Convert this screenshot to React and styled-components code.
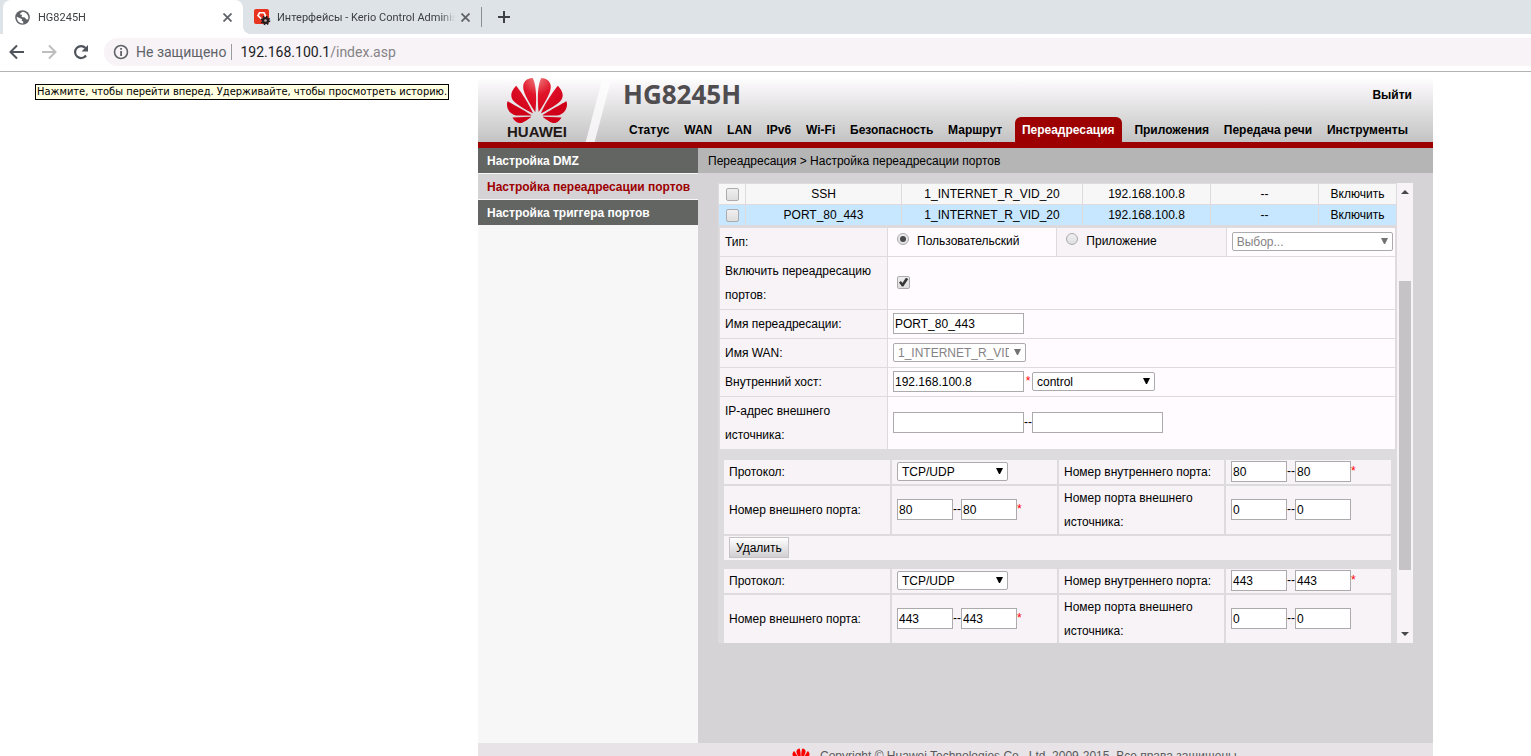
import React from 'react';
import styled, { createGlobalStyle } from 'styled-components';
import { SiHuawei } from 'react-icons/si';

const GlobalStyle = createGlobalStyle`
  * {
    box-sizing: border-box;
  }
  body {
    margin: 0;
    background: #fff;
    font-family: "Liberation Sans", Arial, sans-serif;
    font-size: 12px;
    color: #000;
  }
  input, select, button {
    font: inherit;
    color: inherit;
    margin: 0;
  }
`;

const Page = styled.div`
  position: relative;
  height: 100vh;
  overflow: hidden;
`;

/* browser chrome */
const BrowserBar = styled.header`
  border-bottom: 1px solid #b3b3b3;
  font-family: Roboto, sans-serif;
`;

const TabStrip = styled.div`
  display: flex;
  align-items: center;
  height: 34px;
  padding-left: 3px;
  background: #dee3e7;
`;

const BrowserTab = styled.div`
  position: relative;
  display: flex;
  align-items: center;
  gap: ${props => (props.$active ? 8 : 6)}px;
  width: ${props => (props.$active ? 240 : 238)}px;
  height: 34px;
  padding: 0 11px 0 ${props => (props.$active ? 12 : 11)}px;
  border-radius: 8px 8px 0 0;
  background: ${props => (props.$active ? '#fff' : 'transparent')};
  font-size: 11px;
  color: #3c4043;

  &::after {
    content: "";
    display: ${props => (props.$active ? 'block' : 'none')};
    position: absolute;
    left: 100%;
    bottom: 0;
    width: 8px;
    height: 8px;
    background: radial-gradient(circle at 100% 0, transparent 8px, #fff 8px);
  }
`;

const TabTitle = styled.span`
  flex: 1;
  overflow: hidden;
  white-space: nowrap;
  mask-image: linear-gradient(to right, #000 92%, transparent);
`;

const IconButton = styled.button`
  display: flex;
  padding: 0;
  border: 0;
  background: none;
`;

const TabDivider = styled.span`
  width: 1px;
  height: 20px;
  margin-right: 16px;
  background: #8b8f93;
`;

const Toolbar = styled.div`
  display: flex;
  align-items: center;
  gap: 14px;
  height: 37px;
  padding: 0 0 1px 8px;
`;

const AddressBar = styled.div`
  flex: 1;
  display: flex;
  align-items: center;
  height: 28px;
  padding-left: 9px;
  border-radius: 14px 0 0 14px;
  background: #f7f3f7;
  font-size: 14px;
  color: #868386;
`;

const Security = styled.span`
  margin: 0 8px 0 7px;
  padding-right: 5px;
  border-right: 1px solid #9a9a9f;
  line-height: 16px;
  color: #5f6368;
`;

const Host = styled.span`
  color: #202124;
`;

const Tooltip = styled.div`
  position: absolute;
  top: 84px;
  left: 35px;
  padding: 0 1px;
  border: 1px solid #000;
  background: #ffffe1;
  font-family: "DejaVu Sans Condensed", "DejaVu Sans", sans-serif;
  font-size: 11px;
  line-height: 14px;
  white-space: nowrap;
`;

/* router page */
const Columns = styled.div`
  display: grid;
  grid-template-columns: minmax(0, 478fr) minmax(0, 955px) minmax(0, 98fr);
`;

const Router = styled.div`
  grid-column: 2;
`;

const Banner = styled.div`
  display: flex;
  height: 76px;
  border-bottom: 6px solid #9c0000;
  background: linear-gradient(#fff 6px, #f7f5f7 14px, #c3c3c3);
`;

const LogoBox = styled.div`
  display: flex;
  flex-direction: column;
  align-items: center;
  width: 106px;
  padding: 5px 0 0 12px;
  font-size: 15px;
  font-weight: bold;
  line-height: 16px;
  color: #231815;
`;

const Petals = styled(SiHuawei)`
  width: 60px;
  height: 47px;

  path {
    fill: url(#petals);
  }
`;

const Slash = styled.div`
  width: 28px;
  clip-path: polygon(64% 12%, 96% 12%, 38% 100%, 6% 100%);
  background: linear-gradient(#fff, #f3f1f3);
`;

const BannerBody = styled.div`
  flex: 1;
  display: flex;
  flex-direction: column;
  justify-content: space-between;
`;

const BannerTop = styled.div`
  display: flex;
  justify-content: space-between;
  padding: 7px 21px 0 11px;
`;

const Model = styled.h1`
  margin: 0;
  font-family: "Noto Sans", sans-serif;
  font-size: 26px;
  line-height: 30px;
  color: #4f4d4f;
`;

const Logout = styled.a`
  padding-top: 9px;
  font-size: 12px;
  font-weight: bold;
  line-height: 14px;
  color: #000;
  text-decoration: none;
`;

const Nav = styled.nav`
  display: flex;
  justify-content: space-between;
  padding: 0 18px 0 10px;
`;

const NavLink = styled.a`
  margin: 0 ${props => (props.$active ? 5 : 0)}px;
  padding: 2px 7px 0;
  border-radius: 6px 6px 0 0;
  background: ${props => (props.$active ? '#9c0000' : 'none')};
  color: ${props => (props.$active ? '#fff' : '#000')};
  font-weight: bold;
  line-height: 23px;
  text-decoration: none;
  white-space: nowrap;
`;

const Body = styled.div`
  display: flex;
  height: 595px;
`;

const Sidebar = styled.aside`
  display: flex;
  flex-direction: column;
  gap: 1px;
  width: 220px;
  background: #f7f7f7;
`;

const SideLink = styled.a`
  padding: 2px 0 0 9px;
  background: ${props => (props.$active ? '#d6d3d6' : '#636563')};
  color: ${props => (props.$active ? '#9c0000' : '#fff')};
  font-weight: bold;
  line-height: 23px;
  text-decoration: none;
  white-space: nowrap;
`;

const Main = styled.main`
  flex: 1;
  min-width: 0;
  background: #d6d3d6;
`;

const Breadcrumb = styled.div`
  padding: 2px 0 0 10px;
  background: #b5b5b5;
  line-height: 23px;
`;

const Frame = styled.div`
  display: flex;
  height: 460px;
  margin: 10px 20px 0;
  overflow: hidden;
`;

const Scroller = styled.div`
  flex: 1;
  min-width: 0;
  background: #dedbde;
`;

const ScrollBar = styled.div`
  display: flex;
  flex-direction: column;
  align-items: center;
  justify-content: space-between;
  width: 16px;
  padding: 7px 0;
  background: #f7f3f7;
`;

const Thumb = styled.div`
  width: 12px;
  height: 289px;
  margin-top: 24px;
  background: #c6c3c6;
`;

const RuleTable = styled.table`
  width: 100%;
  table-layout: fixed;
  border-spacing: 1px;

  td {
    height: 20px;
    padding: 0;
    text-align: center;
    line-height: 20px;
  }
`;

const RuleRow = styled.tr`
  background: ${props => (props.$selected ? '#c6e7ff' : '#f7f7f7')};
`;

const RuleCol = styled.col`
  width: ${props => props.$width};
`;

const FormTable = styled.table`
  width: calc(100% - 2px);
  margin: 1px 1px 0;
  table-layout: fixed;
  border-spacing: 1px;
`;

const Label = styled.th`
  width: ${props => props.$width || 'auto'};
  height: 28px;
  padding: 2px 5px;
  background: #f7f3f7;
  font-weight: normal;
  line-height: 24px;
  text-align: left;
`;

const Field = styled.td`
  height: 28px;
  padding: 0 2px 2px 5px;
  background: ${props => (props.$shaded ? '#f7f3f7' : '#fffbff')};
`;

const PortTable = styled.table`
  width: calc(100% - 8px);
  margin: ${props => (props.$first ? 8 : 5)}px 4px 0;
  table-layout: fixed;
  border-spacing: 2px;

  th, td {
    height: 24px;
    padding: 0 5px;
    background: #f7f3f7;
  }
  td {
    padding-bottom: 2px;
  }
`;

const Controls = styled.div`
  display: flex;
  align-items: center;
`;

const Choice = styled.label`
  display: flex;
  gap: 8px;
  padding-left: 4px;
  line-height: 18px;
`;

const Tick = styled.input`
  appearance: none;
  display: block;
  width: 13px;
  height: 13px;
  margin: 0 auto;
  border: 1px solid #adaaad;
  border-radius: 2px;
  background: linear-gradient(#efefef, #dedede);

  &:checked::after {
    content: "";
    display: block;
    width: 11px;
    height: 11px;
    background: #393839;
    clip-path: polygon(9% 55%, 27% 42%, 40% 58%, 72% 12%, 94% 22%, 48% 90%, 36% 90%);
  }

  ${Controls} & {
    margin: 0 4px;
  }
`;

const Radio = styled.input`
  appearance: none;
  width: 12px;
  height: 12px;
  margin-top: 1px;
  border: 1px solid #adaaad;
  border-radius: 50%;
  background: linear-gradient(#efefef, #dedede);

  &:checked::after {
    content: "";
    display: block;
    width: 6px;
    height: 6px;
    margin: 2px;
    border-radius: 50%;
    background: #4a494a;
  }
`;

const TextBox = styled.input`
  width: ${props => props.$width}px;
  height: 21px;
  padding: 2px 1px 0;
  border: 1px solid #adaaad;
  background: #fff;
`;

const SelectWrap = styled.span`
  position: relative;
  display: flex;
  width: ${props => props.$width};

  svg {
    position: absolute;
    right: 5px;
    top: 6px;
    pointer-events: none;
  }
`;

const SelectBox = styled.select`
  appearance: none;
  width: 100%;
  height: 19px;
  padding: 1px 16px 0 4px;
  border: 1px solid #adaaad;
  border-radius: 2px;
  background: #fff;
  overflow: hidden;

  &:disabled {
    color: #848284;
    opacity: 1;
  }
`;

const Star = styled.span`
  width: 8px;
  color: #f00;
  text-align: ${props => (props.$tight ? 'left' : 'center')};
`;

const DeleteButton = styled.button`
  display: block;
  height: 21px;
  padding: 1px 6px 0;
  border: 1px solid #c6c3c6;
  background: linear-gradient(#fff, #d0ced0);
  line-height: 18px;
`;

const Footer = styled.footer`
  display: flex;
  align-items: center;
  gap: 9px;
  height: 26px;
  padding-left: 313px;
  background: #e7e3e7;
  color: #5a595a;
  white-space: nowrap;
`;

const navItems = ['Статус', 'WAN', 'LAN', 'IPv6', 'Wi-Fi', 'Безопасность', 'Маршрут', 'Переадресация', 'Приложения', 'Передача речи', 'Инструменты'];

const sideItems = ['Настройка DMZ', 'Настройка переадресации портов', 'Настройка триггера портов'];

const rules = [
    { name: 'SSH', wan: '1_INTERNET_R_VID_20', host: '192.168.100.8', source: '--', state: 'Включить' },
    { name: 'PORT_80_443', wan: '1_INTERNET_R_VID_20', host: '192.168.100.8', source: '--', state: 'Включить' },
];

function CloseIcon() {
    return (
        <svg width="9" height="9" viewBox="0 0 9 9" stroke="#5f6368" strokeWidth="1.8">
            <path d="M.5.5l8 8M8.5.5l-8 8" />
        </svg>
    );
}

function GlobeIcon() {
    return (
        <svg width="15" height="15" viewBox="0 0 15 15">
            <circle cx="7.5" cy="7.5" r="7.3" fill="#5f6368" />
            <path d="M8 1.8C6 2.4 5 3.4 5 4.4l2 .3-.4 2.2 3.2.7 1.4 1.7 2 .2a6 6 0 0 0-3.6-7.2z" fill="#fff" />
            <path d="M1.7 6.8l3.500 1.5 1.9.9-.4 1.6 1.500.8v1.8A6 6 0 0 1 1.7 6.8z" fill="#fff" />
        </svg>
    );
}

function KerioIcon() {
    return (
        <svg width="17" height="17" viewBox="0 0 17 17">
            <rect width="15" height="15" rx="2" fill="#e8341f" />
            <path d="M8 10.5L4 6.5 5.5 3.8h4.5L11.5 6.5 9.5 8.5" fill="none" stroke="#fff" strokeWidth="1.6" />
            <g transform="translate(11.5 11.5)">
                <circle r="3.6" fill="#231f20" />
                <circle r="4" fill="none" stroke="#231f20" strokeWidth="1.6" strokeDasharray="1.6 1.54" />
                <circle r="1.3" fill="#c8a9a4" />
            </g>
        </svg>
    );
}

function Arrow({ forward }) {
    return (
        <svg width="18" height="18" viewBox="0 0 18 18" fill="none" stroke={forward ? '#bdbebd' : '#50555c'} strokeWidth="2">
            {forward ? <path d="M2 9h13M9 2.5L15.5 9 9 15.5" /> : <path d="M16 9H3M9 2.5L2.5 9 9 15.5" />}
        </svg>
    );
}

function ReloadIcon() {
    return (
        <svg width="18" height="18" viewBox="0 0 18 18">
            <path d="M14 12.5A6 6 0 1 1 13.5 5" fill="none" stroke="#50555c" strokeWidth="2.2" />
            <path d="M16 2v6.5H9.5z" fill="#50555c" />
        </svg>
    );
}

function InfoIcon() {
    return (
        <svg width="16" height="16" viewBox="0 0 16 16">
            <circle cx="8" cy="8" r="6.5" fill="none" stroke="#5f6368" strokeWidth="1.6" />
            <path d="M7.2 4h1.8v1.8H7.2zM7.2 7h1.8v5H7.2z" fill="#5f6368" />
        </svg>
    );
}

function Select({ label, value, width, disabled }) {
    return (
        <SelectWrap $width={width}>
            <SelectBox aria-label={label} disabled={disabled} defaultValue={value}>
                <option>{value}</option>
            </SelectBox>
            <svg width="7" height="6" viewBox="0 0 7 6" fill={disabled ? '#737173' : '#000'}>
                <path d="M0 0h7L4 6H3z" />
            </svg>
        </SelectWrap>
    );
}

function PortRange({ label, value, required }) {
    return (
        <Controls>
            <TextBox $width={56} aria-label={label + ' от'} defaultValue={value} />
            --
            <TextBox $width={56} aria-label={label + ' до'} defaultValue={value} />
            {required && <Star $tight>*</Star>}
        </Controls>
    );
}

function PortGroup({ port, first }) {
    return (
        <PortTable $first={first}>
            <tbody>
                <tr>
                    <Label scope="row" $width="166px">Протокол:</Label>
                    <Field><Select label="Протокол" value="TCP/UDP" width="111px" /></Field>
                    <Label scope="row">Номер внутреннего порта:</Label>
                    <Field><PortRange label="Внутренний порт" value={port} required /></Field>
                </tr>
                <tr>
                    <Label scope="row">Номер внешнего порта:</Label>
                    <Field><PortRange label="Внешний порт" value={port} required /></Field>
                    <Label scope="row">Номер порта внешнего источника:</Label>
                    <Field><PortRange label="Порт внешнего источника" value="0" /></Field>
                </tr>
                {first && (
                    <tr>
                        <Field colSpan={4}><DeleteButton type="button">Удалить</DeleteButton></Field>
                    </tr>
                )}
            </tbody>
        </PortTable>
    );
}

function App() {
    return (
        <Page>
            <GlobalStyle />
            <BrowserBar>
                <TabStrip>
                    <BrowserTab $active>
                        <GlobeIcon />
                        <TabTitle>HG8245H</TabTitle>
                        <IconButton aria-label="Закрыть"><CloseIcon /></IconButton>
                    </BrowserTab>
                    <BrowserTab>
                        <KerioIcon />
                        <TabTitle>Интерфейсы - Kerio Control Administration</TabTitle>
                        <IconButton aria-label="Закрыть"><CloseIcon /></IconButton>
                    </BrowserTab>
                    <TabDivider />
                    <IconButton aria-label="Новая вкладка">
                        <svg width="12" height="12" viewBox="0 0 12 12" stroke="#3c4043" strokeWidth="2">
                            <path d="M6 0v12M0 6h12" />
                        </svg>
                    </IconButton>
                </TabStrip>
                <Toolbar>
                    <IconButton aria-label="Назад"><Arrow /></IconButton>
                    <IconButton aria-label="Вперед"><Arrow forward /></IconButton>
                    <IconButton aria-label="Обновить"><ReloadIcon /></IconButton>
                    <AddressBar>
                        <InfoIcon />
                        <Security>Не защищено</Security>
                        <Host>192.168.100.1</Host>/index.asp
                    </AddressBar>
                </Toolbar>
            </BrowserBar>

            <Columns>
                <Router>
                    <Banner>
                        <LogoBox>
                            <svg width="60" height="0">
                                <radialGradient id="petals" gradientUnits="userSpaceOnUse" cx="12" cy="3" r="15">
                                    <stop offset="0" stopColor="#f08080" />
                                    <stop offset="0.45" stopColor="#e0142a" />
                                    <stop offset="1" stopColor="#d00018" />
                                </radialGradient>
                            </svg>
                            <Petals viewBox="0 2.7 24 18.6" />
                            HUAWEI
                        </LogoBox>
                        <Slash />
                        <BannerBody>
                            <BannerTop>
                                <Model>HG8245H</Model>
                                <Logout href="#logout">Выйти</Logout>
                            </BannerTop>
                            <Nav>
                                {navItems.map(item => (
                                    <NavLink key={item} href="#nav" $active={item === 'Переадресация'}>{item}</NavLink>
                                ))}
                            </Nav>
                        </BannerBody>
                    </Banner>

                    <Body>
                        <Sidebar>
                            {sideItems.map((item, i) => (
                                <SideLink key={item} href="#side" $active={i === 1}>{item}</SideLink>
                            ))}
                        </Sidebar>
                        <Main>
                            <Breadcrumb>Переадресация &gt; Настройка переадресации портов</Breadcrumb>
                            <Frame>
                                <Scroller>
                                    <RuleTable>
                                        <colgroup>
                                            <RuleCol $width="26px" />
                                            <RuleCol $width="155px" />
                                            <RuleCol $width="auto" />
                                            <RuleCol $width="127px" />
                                            <RuleCol $width="107px" />
                                            <RuleCol $width="77px" />
                                        </colgroup>
                                        <tbody>
                                            {rules.map((rule, i) => (
                                                <RuleRow key={rule.name} $selected={i === 1}>
                                                    <td><Tick type="checkbox" aria-label={rule.name} /></td>
                                                    <td>{rule.name}</td>
                                                    <td>{rule.wan}</td>
                                                    <td>{rule.host}</td>
                                                    <td>{rule.source}</td>
                                                    <td>{rule.state}</td>
                                                </RuleRow>
                                            ))}
                                        </tbody>
                                    </RuleTable>

                                    <FormTable>
                                        <tbody>
                                            <tr>
                                                <Label scope="row" $width="167px">Тип:</Label>
                                                <Field>
                                                    <Choice><Radio type="radio" name="type" defaultChecked />Пользовательский</Choice>
                                                </Field>
                                                <Field $shaded>
                                                    <Choice><Radio type="radio" name="type" />Приложение</Choice>
                                                </Field>
                                                <Field><Select label="Приложение" value="Выбор..." width="auto" disabled /></Field>
                                            </tr>
                                            <tr>
                                                <Label scope="row"><label htmlFor="enable">Включить переадресацию портов:</label></Label>
                                                <Field colSpan={3}>
                                                    <Controls><Tick id="enable" type="checkbox" defaultChecked /></Controls>
                                                </Field>
                                            </tr>
                                            <tr>
                                                <Label scope="row"><label htmlFor="name">Имя переадресации:</label></Label>
                                                <Field colSpan={3}>
                                                    <Controls><TextBox id="name" $width={131} defaultValue="PORT_80_443" /></Controls>
                                                </Field>
                                            </tr>
                                            <tr>
                                                <Label scope="row">Имя WAN:</Label>
                                                <Field colSpan={3}><Select label="Имя WAN" value="1_INTERNET_R_VID_20" width="133px" disabled /></Field>
                                            </tr>
                                            <tr>
                                                <Label scope="row"><label htmlFor="host">Внутренний хост:</label></Label>
                                                <Field colSpan={3}>
                                                    <Controls>
                                                        <TextBox id="host" $width={131} defaultValue="192.168.100.8" />
                                                        <Star>*</Star>
                                                        <Select label="Хост" value="control" width="123px" />
                                                    </Controls>
                                                </Field>
                                            </tr>
                                            <tr>
                                                <Label scope="row"><label htmlFor="source">IP-адрес внешнего источника:</label></Label>
                                                <Field colSpan={3}>
                                                    <Controls>
                                                        <TextBox id="source" $width={131} />
                                                        --
                                                        <TextBox $width={131} aria-label="IP-адрес до" />
                                                    </Controls>
                                                </Field>
                                            </tr>
                                        </tbody>
                                    </FormTable>

                                    <PortGroup port="80" first />
                                    <PortGroup port="443" />
                                </Scroller>
                                <ScrollBar>
                                    <svg width="8" height="4" viewBox="0 0 8 4" fill="#4a494a"><path d="M4 0l4 4H0z" /></svg>
                                    <Thumb />
                                    <svg width="8" height="4" viewBox="0 0 8 4" fill="#4a494a"><path d="M0 0h8L4 4z" /></svg>
                                </ScrollBar>
                            </Frame>
                        </Main>
                    </Body>
                    <Footer>
                        <SiHuawei size={20} color="#f00" />
                        Copyright © Huawei Technologies Co., Ltd. 2009-2015. Все права защищены.
                    </Footer>
                </Router>
            </Columns>
            <Tooltip role="tooltip">Нажмите, чтобы перейти вперед. Удерживайте, чтобы просмотреть историю.</Tooltip>
        </Page>
    );
}

export default App;
